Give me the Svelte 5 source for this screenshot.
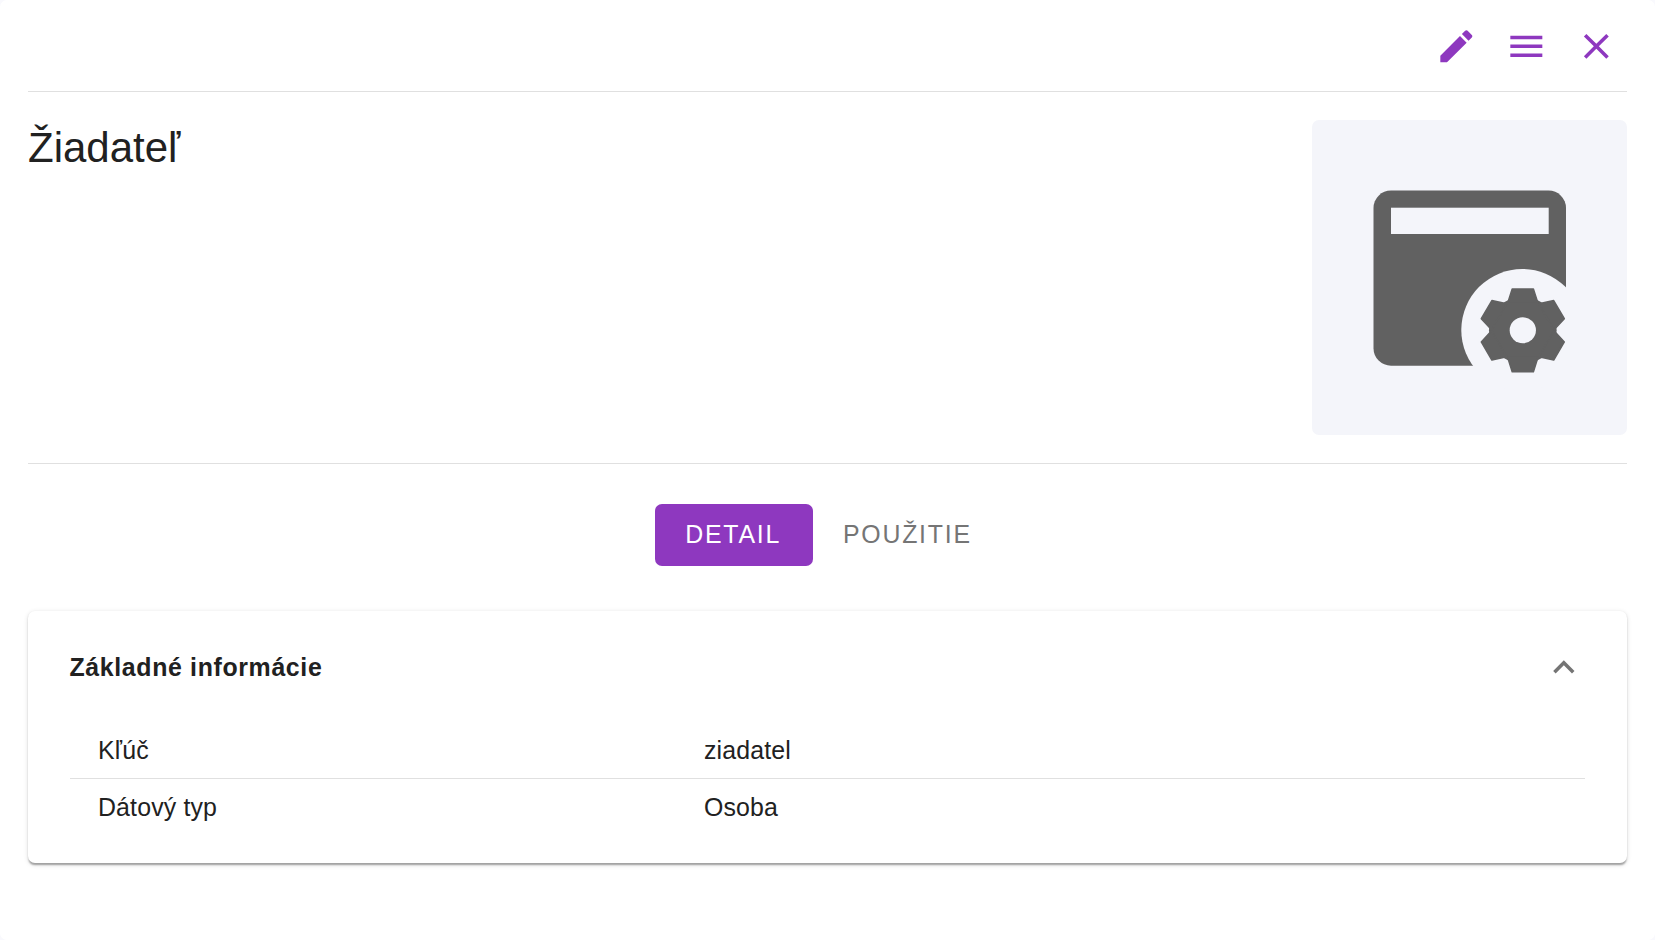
<script>
  const teeth = [0, 60, 120, 180, 240, 300]
  const rows = [
    { name: 'Kľúč', value: 'ziadatel' },
    { name: 'Dátový typ', value: 'Osoba' },
  ]
  let tab = $state('detail')
  let open = $state(true)
</script>

<div class="panel">
  <header class="toolbar">
    <button class="icon-btn" aria-label="Upraviť">
      <svg viewBox="0 0 24 24"><path d="M3 17.25V21h3.75L17.81 9.94l-3.75-3.75L3 17.25zM20.71 7.04c.39-.39.39-1.02 0-1.41l-2.34-2.34c-.39-.39-1.02-.39-1.41 0l-1.83 1.83 3.75 3.75 1.83-1.83z"></path></svg>
    </button>
    <button class="icon-btn" aria-label="Menu">
      <svg viewBox="0 0 24 24"><path d="M3 18h18v-2H3v2zm0-5h18v-2H3v2zm0-7v2h18V6H3z"></path></svg>
    </button>
    <button class="icon-btn" aria-label="Zavrieť">
      <svg viewBox="0 0 24 24"><path d="M19 6.41 17.59 5 12 10.59 6.41 5 5 6.41 10.59 12 5 17.59 6.41 19 12 13.41 17.59 19 19 17.59 13.41 12z"></path></svg>
    </button>
  </header>

  <section class="intro">
    <h1>Žiadateľ</h1>
    <div class="thumb">
      <svg viewBox="0 0 315 315" width="315" height="315">
        <rect x="61.5" y="70.5" width="192.5" height="175.2" rx="17.5" fill="#616161"></rect>
        <rect x="79" y="87.7" width="157.7" height="26.3" fill="#f4f5fa"></rect>
        <circle cx="210.3" cy="210" r="61" fill="#f4f5fa"></circle>
        <g transform="translate(210.8 210.3) scale(1.01 1)" fill="#616161">
          <circle r="33.5"></circle>
          {#each teeth as angle}
            <polygon
              points="-15,-27 -10.5,-41.4 10.5,-41.4 15,-27"
              transform="rotate({angle})"
              stroke="#616161"
              stroke-width="1.5"
              stroke-linejoin="round"></polygon>
          {/each}
          <circle r="13" fill="#f4f5fa"></circle>
        </g>
      </svg>
    </div>
  </section>

  <nav class="tabs">
    <button class="tab" class:active={tab === 'detail'} onclick={() => (tab = 'detail')}>Detail</button>
    <button class="tab" class:active={tab === 'usage'} onclick={() => (tab = 'usage')}>Použitie</button>
  </nav>

  <section class="card">
    <div class="card-head">
      <h2>Základné informácie</h2>
      <button class="chevron" aria-label="Zbaliť" onclick={() => (open = !open)}>
        <svg viewBox="0 0 24 24" class:flipped={!open}><path d="M12 8l-6 6 1.41 1.41L12 10.83l4.59 4.58L18 14z"></path></svg>
      </button>
    </div>
    {#if open}
      <div class="rows">
        {#each rows as row}
          <div class="row">
            <span class="name">{row.name}</span>
            <span class="value">{row.value}</span>
          </div>
        {/each}
      </div>
    {/if}
  </section>
</div>

<style>
  :global(body) {
    background: #f9f9fd;
  }

  .panel {
    height: 940px;
    box-sizing: border-box;
    padding: 0 28px;
    background: #fff;
    border-radius: 7px;
    font-family: "Liberation Sans", Arial, sans-serif;
    font-size: 24.89px;
    color: #212121;
  }

  button {
    font: inherit;
    border: 0;
    background: none;
    cursor: pointer;
  }

  .toolbar {
    display: flex;
    justify-content: flex-end;
    gap: 7.33px;
    padding: 15px 0 13.4px;
    border-bottom: 1px solid #e0e0e0;
  }

  .icon-btn {
    padding: 10px;
    width: 62.67px;
    height: 62.67px;
    fill: #8e38bf;
    transform: translateX(1px);
  }

  .icon-btn svg {
    display: block;
    width: 42.67px;
    height: 42.67px;
  }

  .intro {
    display: flex;
    justify-content: space-between;
    align-items: flex-start;
    padding: 28px 0;
    border-bottom: 1px solid #e0e0e0;
  }

  h1 {
    margin: 0;
    font-size: 42px;
    font-weight: 400;
    line-height: 56px;
  }

  .thumb {
    width: 315px;
    height: 315px;
    background: #f4f5fa;
    border-radius: 7px;
  }

  .thumb svg {
    display: block;
  }

  .tabs {
    display: flex;
    justify-content: center;
    margin-top: 40px;
    padding-left: 2px;
  }

  .tab {
    height: 62px;
    padding: 0 30px 2px;
    border-radius: 7px;
    color: #757575;
    text-transform: uppercase;
    letter-spacing: 1.75px;
  }

  .tab.active {
    padding-left: 30px;
    padding-right: 32px;
    background: #8e38bf;
    color: #fff;
  }

  .card {
    margin-top: 45px;
    padding: 0 42px 27px;
    border-radius: 7px;
    background: #fff;
    box-shadow: 0 3.5px 1.8px -1.8px rgba(0, 0, 0, 0.2), 0 1.8px 1.8px 0 rgba(0, 0, 0, 0.14), 0 1.8px 5.3px 0 rgba(0, 0, 0, 0.12);
  }

  .card-head {
    display: flex;
    justify-content: space-between;
    align-items: center;
    height: 112px;
  }

  h2 {
    margin: 0 0 0 -0.5px;
    font-size: 24.89px;
    font-weight: 700;
    letter-spacing: 0.65px;
  }

  .chevron {
    padding: 0;
    height: 42.67px;
    fill: #757575;
    transform: translateX(0.5px);
  }

  .chevron svg {
    display: block;
    width: 42.67px;
    height: 42.67px;
  }

  .flipped {
    transform: rotate(180deg);
  }

  .row {
    display: grid;
    grid-template-columns: 40% 1fr;
    align-items: center;
    height: 57px;
    letter-spacing: 0.15px;
  }

  .row:first-child {
    height: 55px;
    border-bottom: 1px solid #e0e0e0;
  }

  .name {
    padding-left: 28px;
  }

  .value {
    padding-left: 28px;
  }
</style>
